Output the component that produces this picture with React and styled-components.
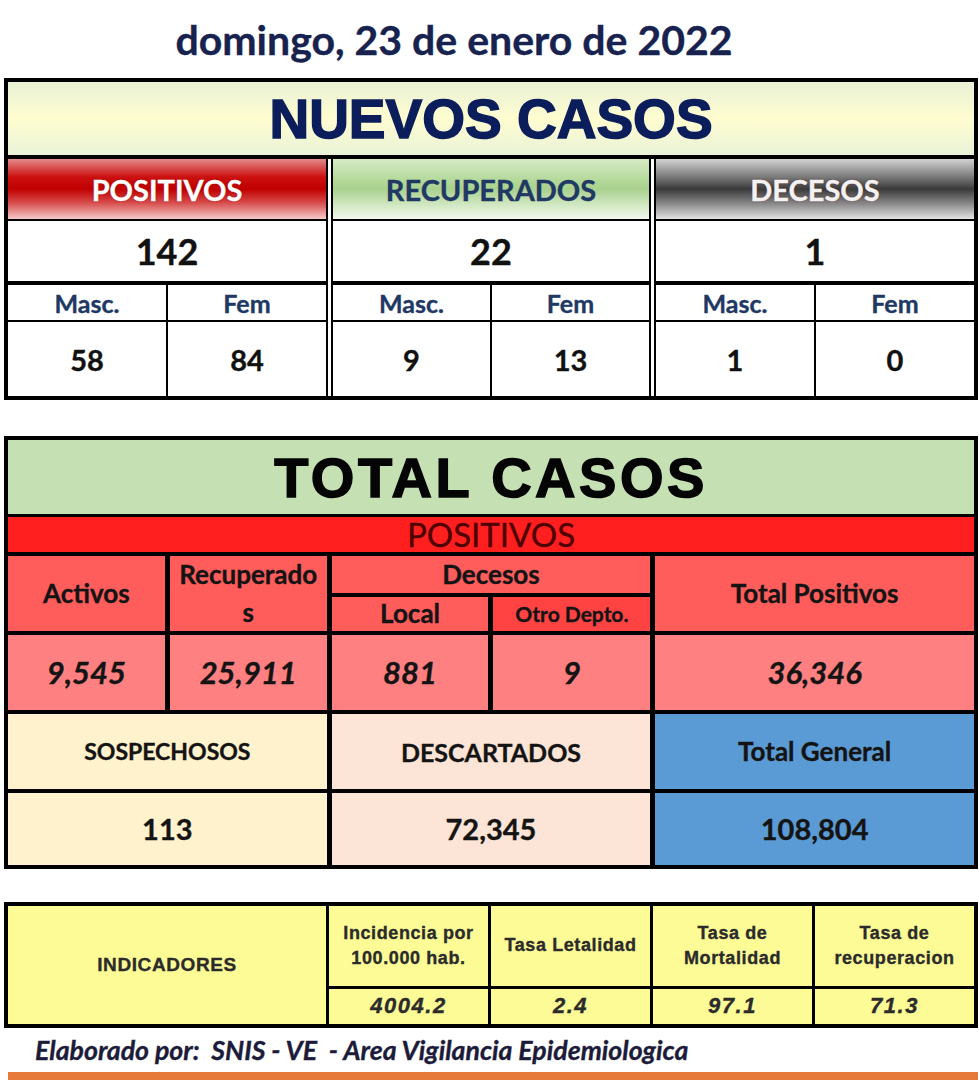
import React from 'react';
import styled, { createGlobalStyle } from 'styled-components';

const GlobalStyle = createGlobalStyle`
  body {
    margin: 0;
    background: #fff;
    font-family: Lato, "Open Sans", sans-serif;
    -webkit-text-stroke: 0.35px currentColor;
  }
`;

const Page = styled.div`
  width: 980px;
  height: 1081px;
  overflow: hidden;
  display: flex;
  flex-direction: column;
`;

const DateTitle = styled.h1`
  margin: 0;
  height: 78px;
  display: flex;
  align-items: center;
  justify-content: center;
  padding-right: 72px;
  font-size: 41px;
  font-weight: 700;
  color: #17224f;
`;

const Sheet = styled.div`
  margin: ${({ $top }) => $top || 0}px 2px 0 4px;
  border: 4px solid #000;
  background: #000;
`;

const Banner = styled.div`
  height: ${({ $h }) => $h}px;
  display: flex;
  align-items: center;
  justify-content: center;
  background: ${({ $bg }) => $bg};
  color: ${({ $color }) => $color};
  font-family: "Liberation Sans", Arial, sans-serif;
  font-weight: 700;
  font-size: ${({ $size }) => $size}px;
  letter-spacing: ${({ $ls }) => $ls || 0}px;
  -webkit-text-stroke: 1.5px currentColor;
`;

/* ---- Nuevos casos ---- */

const GroupRow = styled.div`
  margin-top: 4px;
  display: grid;
  grid-template-columns: repeat(3, 1fr);
  gap: 3px;
  background: #fff;
`;

const Group = styled.div`
  display: grid;
  grid-template-columns: 1fr 1fr;
  grid-template-rows: 60px 60px 37px 74px;
  gap: 2px;
  background: #000;
  border-left: 2px solid #000;
  border-right: 2px solid #000;
  &:first-child { border-left: none; }
  &:last-child { border-right: none; }
`;

const GroupHead = styled.div`
  grid-column: 1 / 3;
  display: flex;
  align-items: center;
  justify-content: center;
  font-size: 29px;
  font-weight: 700;
  color: ${({ $color }) => $color};
  background: ${({ $bg }) => $bg};
  text-shadow: ${({ $light }) => ($light ? '0 0 2px rgba(110,0,0,0.6)' : 'none')};
`;

const GroupTotal = styled.div`
  grid-column: 1 / 3;
  background: #fff;
  display: flex;
  align-items: center;
  justify-content: center;
  font-size: 36px;
  font-weight: 700;
  color: #111;
`;

const SexHead = styled.div`
  margin-top: 2px;
  background: #fff;
  display: flex;
  align-items: center;
  justify-content: center;
  font-size: 25px;
  font-weight: 700;
  color: #203864;
`;

const SexValue = styled.div`
  background: #fff;
  display: flex;
  align-items: center;
  justify-content: center;
  font-size: 29px;
  font-weight: 700;
  color: #111;
`;

/* ---- Total casos ---- */

const TotalGrid = styled.div`
  margin-top: 3px;
  display: grid;
  grid-template-columns: repeat(6, 1fr);
  grid-template-rows: 35px 37px 34px 75px 75px 72px;
  column-gap: 5px;
  row-gap: 4px;
`;

const Cell = styled.div`
  grid-column: ${({ $col }) => $col || 'auto'};
  grid-row: ${({ $row }) => $row || 'auto'};
  display: flex;
  align-items: center;
  justify-content: center;
  text-align: center;
  background: ${({ $bg }) => $bg};
  color: ${({ $color }) => $color || '#141414'};
  font-size: ${({ $size }) => $size || 26}px;
  font-weight: ${({ $weight }) => $weight || 700};
  font-style: ${({ $italic }) => ($italic ? 'italic' : 'normal')};
  line-height: ${({ $lh }) => $lh || 1.2};
`;

/* ---- Indicadores ---- */

const IndicGrid = styled.div`
  display: grid;
  grid-template-columns: 2fr 1fr 1fr 1fr 1fr;
  grid-template-rows: 80px 35px;
  gap: 3px;
`;

const IndicCell = styled.div`
  grid-row: ${({ $row }) => $row || 'auto'};
  display: flex;
  align-items: center;
  justify-content: center;
  text-align: center;
  background: #fdfb96;
  color: #2b2b2b;
  font-family: "Liberation Sans", Arial, sans-serif;
  font-weight: 700;
  font-size: ${({ $size }) => $size || 18}px;
  letter-spacing: ${({ $ls }) => $ls ?? 0.6}px;
  font-style: ${({ $italic }) => ($italic ? 'italic' : 'normal')};
  line-height: 1.4;
`;

const Footer = styled.div`
  height: 44px;
  display: flex;
  align-items: center;
  padding-left: 35px;
  white-space: pre;
  font-size: 26.7px;
  font-weight: 700;
  font-style: italic;
  color: #1c1c3a;
`;

const OrangeBar = styled.div`
  margin: 0 2px 0 8px;
  height: 8px;
  background: #e57a3a;
`;

const redGrad =
  'linear-gradient(180deg, #e48a8a 0%, #cc1010 30%, #c00000 50%, #d64848 72%, #f6c9c9 100%)';
const greenGrad =
  'linear-gradient(180deg, #d6ebc6 0%, #b4d99b 35%, #a9d18e 50%, #cfe6bf 75%, #f2f9ee 100%)';
const grayGrad =
  'linear-gradient(180deg, #d2d2d2 0%, #7a7a7a 30%, #3a3a3a 50%, #8a8a8a 75%, #e4e4e4 100%)';

const groups = [
  { label: 'POSITIVOS', bg: redGrad, color: '#fff', light: true, total: '142', m: '58', f: '84' },
  { label: 'RECUPERADOS', bg: greenGrad, color: '#1f3864', total: '22', m: '9', f: '13' },
  { label: 'DECESOS', bg: grayGrad, color: '#f2f2f2', light: true, total: '1', m: '1', f: '0' },
];

const HEAD = '#ff5c5c';
const VAL = '#ff8080';

function App() {
  return (
    <Page>
      <GlobalStyle />
      <DateTitle>domingo, 23 de enero de 2022</DateTitle>

      <Sheet>
        <Banner
          $h={73}
          $size={55}
          $color="#0b1e5b"
          $bg="linear-gradient(180deg, #e8f1d6 0%, #fffdd0 50%, #e9f2d8 100%)"
        >
          NUEVOS CASOS
        </Banner>
        <GroupRow>
          {groups.map((g) => (
            <Group key={g.label}>
              <GroupHead $bg={g.bg} $color={g.color} $light={g.light}>
                {g.label}
              </GroupHead>
              <GroupTotal>{g.total}</GroupTotal>
              <SexHead>Masc.</SexHead>
              <SexHead>Fem</SexHead>
              <SexValue>{g.m}</SexValue>
              <SexValue>{g.f}</SexValue>
            </Group>
          ))}
        </GroupRow>
      </Sheet>

      <Sheet $top={36}>
        <Banner $h={74} $size={56} $ls={3.5} $color="#050505" $bg="#c5e0b3">
          TOTAL CASOS
        </Banner>
        <TotalGrid>
          <Cell $col="1 / 7" $bg="#ff1f1f" $color="#4f0000" $size={33} $weight={400}>
            POSITIVOS
          </Cell>
          <Cell $row="2 / 4" $bg={HEAD}>Activos</Cell>
          <Cell $row="2 / 4" $bg={HEAD} $lh={1.45}>
            Recuperado
            <br />s
          </Cell>
          <Cell $col="3 / 5" $bg={HEAD}>Decesos</Cell>
          <Cell $col="5 / 7" $row="2 / 4" $bg={HEAD}>Total Positivos</Cell>
          <Cell $bg={HEAD}>Local</Cell>
          <Cell $bg="#ff4343" $size={21}>Otro Depto.</Cell>

          <Cell $bg={VAL} $italic $size={31}>9,545</Cell>
          <Cell $bg={VAL} $italic $size={31}>25,911</Cell>
          <Cell $bg={VAL} $italic $size={31}>881</Cell>
          <Cell $bg={VAL} $italic $size={31}>9</Cell>
          <Cell $col="5 / 7" $bg={VAL} $italic $size={31}>36,346</Cell>

          <Cell $col="1 / 3" $bg="#fff2cc" $size={23}>SOSPECHOSOS</Cell>
          <Cell $col="3 / 5" $bg="#fce4d6" $size={25}>DESCARTADOS</Cell>
          <Cell $col="5 / 7" $bg="#5b9bd5" $size={26}>Total General</Cell>
          <Cell $col="1 / 3" $bg="#fff2cc" $size={29}>113</Cell>
          <Cell $col="3 / 5" $bg="#fce4d6" $size={29}>72,345</Cell>
          <Cell $col="5 / 7" $bg="#5b9bd5" $size={29}>108,804</Cell>
        </TotalGrid>
      </Sheet>

      <Sheet $top={33}>
        <IndicGrid>
          <IndicCell $row="1 / 3" $size={19}>INDICADORES</IndicCell>
          <IndicCell>
            Incidencia por
            <br />
            100.000 hab.
          </IndicCell>
          <IndicCell>Tasa Letalidad</IndicCell>
          <IndicCell>
            Tasa de
            <br />
            Mortalidad
          </IndicCell>
          <IndicCell>
            Tasa de
            <br />
            recuperacion
          </IndicCell>
          <IndicCell $italic $size={22} $ls={1.5}>4004.2</IndicCell>
          <IndicCell $italic $size={22} $ls={1.5}>2.4</IndicCell>
          <IndicCell $italic $size={22} $ls={1.5}>97.1</IndicCell>
          <IndicCell $italic $size={22} $ls={1.5}>71.3</IndicCell>
        </IndicGrid>
      </Sheet>

      <Footer>Elaborado por:  SNIS - VE  - Area Vigilancia Epidemiologica</Footer>
      <OrangeBar />
    </Page>
  );
}

export default App;
